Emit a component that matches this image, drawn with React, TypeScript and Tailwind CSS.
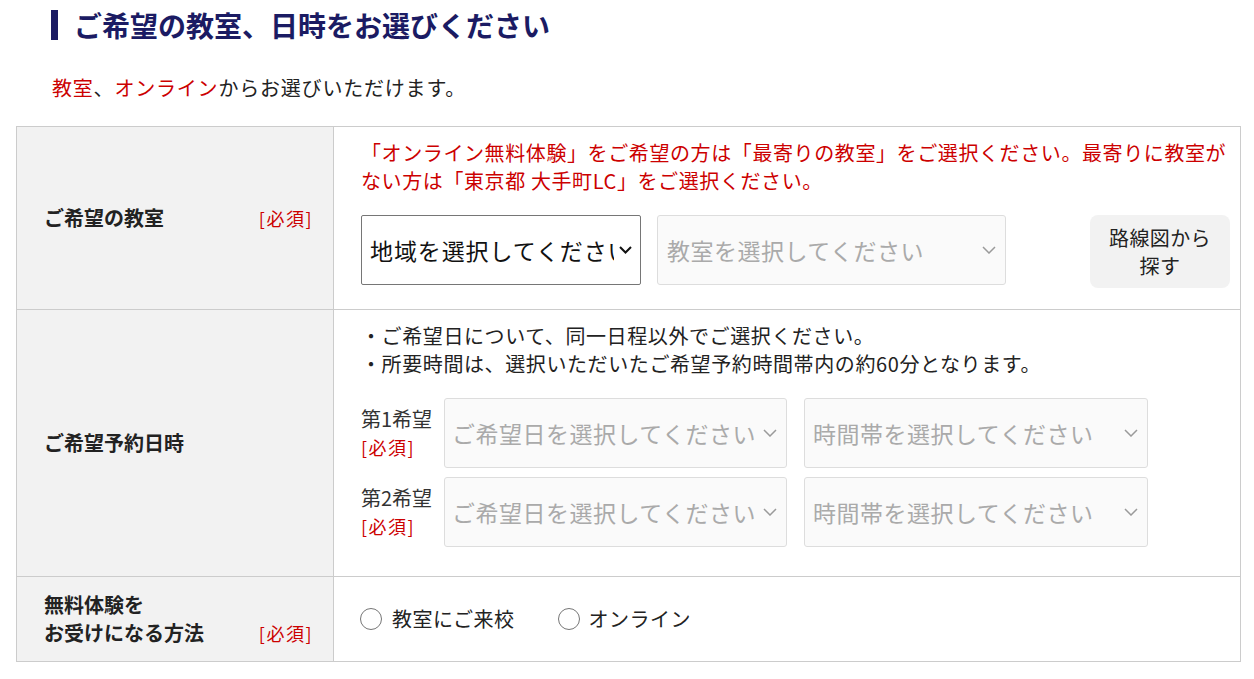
import React from "react";

const font = "font-['Noto_Sans_CJK_JP','Noto_Sans',sans-serif]";

function Chevron({ dark }: { dark?: boolean }) {
  return dark ? (
    <svg width="13" height="8" viewBox="0 0 13 8" className="shrink-0 ml-[5px]">
      <polyline points="1,1 6.5,6.5 12,1" fill="none" stroke="#111" strokeWidth="2" />
    </svg>
  ) : (
    <svg width="14" height="8" viewBox="0 0 14 8" className="shrink-0">
      <polyline points="1,1 7,7 13,1" fill="none" stroke="#9a9a9a" strokeWidth="1.5" />
    </svg>
  );
}

function GraySelect({ label, width, pl }: { label: string; width: string; pl: string }) {
  return (
    <div
      className={`${width} ${pl} h-[70px] pr-[9px] flex items-center justify-between rounded-[3px] border border-[#dddddd] bg-[#fafafa] text-[23px] tracking-[0.5px] text-[#aaaaaa] whitespace-nowrap`}
    >
      <span>{label}</span>
      <Chevron />
    </div>
  );
}

function Required() {
  return <span className="text-[18px] tracking-[1.5px] text-[#cc0000] leading-[28px]">[必須]</span>;
}

function LeftCell({ children }: { children: React.ReactNode }) {
  return (
    <div className="w-[317px] shrink-0 bg-[#f2f2f2] border-r border-[#cccccc] flex items-center pl-[27px] pr-[20px]">
      <div className="w-full flex items-end justify-between">{children}</div>
    </div>
  );
}

export default function App() {
  return (
    <div className={`w-[1254px] h-[679px] bg-white text-[#222222] ${font}`}>
      {/* Heading */}
      <div className="pt-[10px] pl-[51px] flex items-center gap-[16px]">
        <div className="w-[7px] h-[30px] bg-[#1b1b63]" />
        <h2 className="text-[28px] leading-[30px] font-bold text-[#1b1b63]">
          ご希望の教室、日時をお選びください
        </h2>
      </div>

      <p className="mt-[34px] pl-[52px] text-[20px] leading-[28px] tracking-[0.8px]">
        <span className="text-[#cc0000]">教室</span>、
        <span className="text-[#cc0000]">オンライン</span>からお選びいただけます。
      </p>

      {/* Form table */}
      <div className="mt-[24px] ml-[16px] w-[1225px] border border-[#cccccc]">
        {/* Row 1 */}
        <div className="flex border-b border-[#cccccc]">
          <LeftCell>
            <span className="text-[20px] leading-[28px] font-bold">ご希望の教室</span>
            <Required />
          </LeftCell>
          <div className="flex-1 pl-[27px] pr-[10px] pt-[12px] pb-[21px]">
            <p className="text-[20px] leading-[28px] tracking-[0.6px] text-[#cc0000]">
              「オンライン無料体験」をご希望の方は「最寄りの教室」をご選択ください。最寄りに教室が
              <br />
              ない方は「東京都 大手町LC」をご選択ください。
            </p>
            <div className="mt-[20px] flex items-start">
              <div className="w-[280px] h-[70px] pl-[8px] pr-[8px] flex items-center rounded-[2px] border border-[#767676] bg-white text-[23px] tracking-[0.9px] text-[#111111]">
                <span className="flex-1 overflow-hidden whitespace-nowrap">地域を選択してください</span>
                <Chevron dark />
              </div>
              <div className="ml-[16px]">
                <GraySelect label="教室を選択してください" width="w-[349px]" pl="pl-[9px]" />
              </div>
              <button className="ml-auto w-[140px] h-[73px] rounded-[8px] bg-[#f2f2f2] text-[20px] leading-[28px] tracking-[0.4px] text-[#222222]">
                路線図から
                <br />
                探す
              </button>
            </div>
          </div>
        </div>

        {/* Row 2 */}
        <div className="flex border-b border-[#cccccc]">
          <LeftCell>
            <span className="text-[20px] leading-[28px] font-bold">ご希望予約日時</span>
          </LeftCell>
          <div className="flex-1 pl-[27px] pr-[10px] pt-[12px] pb-[29px]">
            <ul className="text-[20px] leading-[28px] tracking-[0.6px]">
              <li>・ご希望日について、同一日程以外でご選択ください。</li>
              <li>・所要時間は、選択いただいたご希望予約時間帯内の約60分となります。</li>
            </ul>
            <div className="mt-[20px] flex flex-col gap-[9px]">
              {["第1希望", "第2希望"].map((n) => (
                <div key={n} className="flex items-center">
                  <div className="w-[83px] flex flex-col">
                    <span className="text-[20px] leading-[28px] text-[#333333]">{n}</span>
                    <Required />
                  </div>
                  <GraySelect label="ご希望日を選択してください" width="w-[343px]" pl="pl-[7px]" />
                  <div className="ml-[17px]">
                    <GraySelect label="時間帯を選択してください" width="w-[344px]" pl="pl-[8px]" />
                  </div>
                </div>
              ))}
            </div>
          </div>
        </div>

        {/* Row 3 */}
        <div className="flex h-[84px]">
          <LeftCell>
            <span className="text-[20px] leading-[28px] font-bold">
              無料体験を
              <br />
              お受けになる方法
            </span>
            <Required />
          </LeftCell>
          <div className="flex-1 pl-[26px] flex items-center text-[20px] leading-[28px] tracking-[0.5px]">
            <label className="flex items-center gap-[10px]">
              <span className="w-[22px] h-[22px] rounded-full border border-[#767676] bg-white" />
              教室にご来校
            </label>
            <label className="ml-[43px] flex items-center gap-[9px]">
              <span className="w-[22px] h-[22px] rounded-full border border-[#767676] bg-white" />
              オンライン
            </label>
          </div>
        </div>
      </div>
    </div>
  );
}
